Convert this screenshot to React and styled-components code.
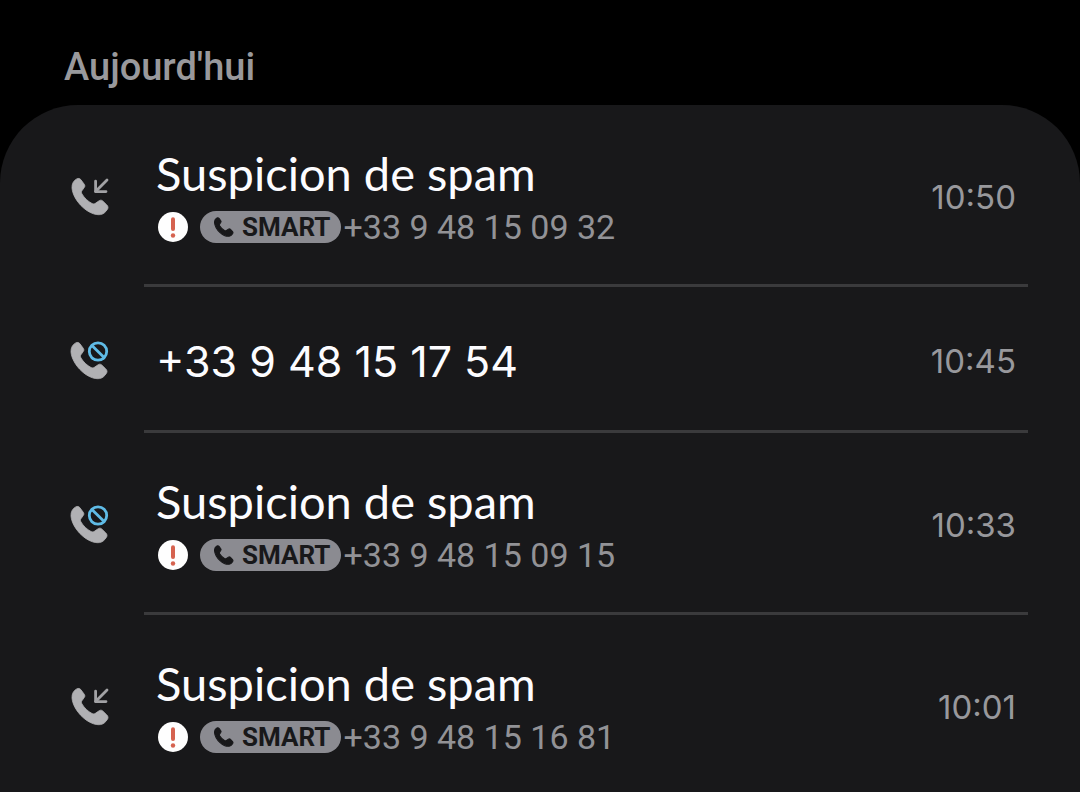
import React from "react";
import styled, { createGlobalStyle } from "styled-components";

const calls = [
	{ id: 1, type: "incoming", title: "Suspicion de spam", number: "+33 9 48 15 09 32", time: "10:50" },
	{ id: 2, type: "blocked", title: "+33 9 48 15 17 54", time: "10:45" },
	{ id: 3, type: "blocked", title: "Suspicion de spam", number: "+33 9 48 15 09 15", time: "10:33" },
	{ id: 4, type: "incoming", title: "Suspicion de spam", number: "+33 9 48 15 16 81", time: "10:01" },
];

const HANDSET =
	"M8.7 4.9C10.2 4.1 11.8 4.3 12.8 5.6L16.2 10.2C17 11.4 17.1 12.4 16.2 13.6L13.9 16.8C13.2 17.8 13.3 18.8 14 20C16.4 24 20 27.4 24 29.5C25.2 30.1 26.4 30 27.4 29.3L31.2 26.7C32.4 25.9 33.6 26 34.7 26.9L38.8 30.9C40.2 32.3 40.4 33.9 39.3 35.5C37.4 38.3 35.4 40.2 32.4 40.6C26.9 41.2 20.6 38.5 14.8 33.3C8.6 27.6 4.5 20.3 4 13.9C3.8 9.8 5.6 6.5 8.7 4.9Z";

function CallIcon({ type }) {
	const blocked = type === "blocked";
	return (
		<Icon viewBox="0 0 44 44" role="img" aria-label={blocked ? "Appel bloqué" : "Appel entrant"}>
			<path
				d={HANDSET}
				fill="#b1b1b4"
				stroke="#b1b1b4"
				strokeWidth="0.8"
				transform={blocked ? "translate(-1 0)" : undefined}
			/>
			{blocked ? (
				<g fill="none" stroke="#5fbbe6" strokeWidth="2.8">
					<circle cx="30" cy="13.5" r="8.7" />
					<path d="M23.9 7.4L36.1 19.6" />
				</g>
			) : (
				<g fill="none" stroke="#a2a2a5" strokeWidth="2.8" strokeLinecap="round" strokeLinejoin="round">
					<path d="M39 6L27.6 17.4" />
					<path d="M27.6 7.2V17.6H38" />
				</g>
			)}
		</Icon>
	);
}

function App() {
	return (
		<Page>
			<GlobalStyle />
			<Day>Aujourd'hui</Day>
			<List>
				{calls.map((call) => (
					<Call key={call.id}>
						<CallIcon type={call.type} />
						<Content $tall={Boolean(call.number)}>
							<Details>
								<Title $digits={!call.number}>{call.title}</Title>
								{call.number && (
									<Info>
										<Warning viewBox="0 0 30 30" role="img" aria-label="Spam">
											<circle cx="15" cy="15" r="15" fill="#fefefe" />
											<path d="M15 7.2V17" stroke="#d5624f" strokeWidth="4" strokeLinecap="round" />
											<circle cx="15" cy="23.5" r="2.2" fill="#d5624f" />
										</Warning>
										<Badge>
											<svg viewBox="3 3 39 39" width="20" height="20" aria-hidden="true">
												<path d={HANDSET} fill="#18181a" stroke="#18181a" strokeWidth="2" />
											</svg>
											SMART
										</Badge>
										<Number>{call.number}</Number>
									</Info>
								)}
							</Details>
							<Time>{call.time}</Time>
						</Content>
					</Call>
				))}
			</List>
		</Page>
	);
}

const GlobalStyle = createGlobalStyle`
	* {
		box-sizing: border-box;
	}
	body {
		margin: 0;
		background: #000;
	}
`;
const Page = styled.main`
	display: flex;
	flex-direction: column;
	height: 100vh;
	background: #000;
	font-family: Roboto, sans-serif;
`;
const Day = styled.h1`
	margin: 0;
	padding: 47px 64px 18px;
	color: #99999c;
	font-size: 38px;
	font-weight: 500;
	line-height: 40px;
`;
const List = styled.ul`
	flex: 1;
	min-height: 0;
	margin: 0;
	padding: 0;
	list-style: none;
	overflow-y: auto;
	scrollbar-width: none;
	background: #18181a;
	border-radius: 78px 78px 0 0;
`;
const Call = styled.li`
	display: grid;
	grid-template-columns: 44px 1fr;
	align-items: center;
	column-gap: 32px;
	padding: 0 52px 0 68px;
`;
const Icon = styled.svg`
	width: 44px;
	height: 44px;
`;
const Content = styled.div`
	display: flex;
	align-items: center;
	justify-content: space-between;
	min-height: ${(props) => (props.$tall ? "182px" : "146px")};
	padding: 4px 12px 0;
	border-bottom: 3px solid #3a3a3c;

	${Call}:last-child & {
		border-color: transparent;
	}
`;
const Details = styled.div`
	display: flex;
	flex-direction: column;
	gap: 8px;
	padding-top: 1px;
`;
const Title = styled.div`
	color: #fcfcff;
	font-family: ${(props) => (props.$digits ? "Inter" : "Lato")}, sans-serif;
	font-size: ${(props) => (props.$digits ? "43px" : "47px")};
	line-height: 52px;
`;
const Info = styled.div`
	display: flex;
	align-items: center;
	padding-left: 2px;
`;
const Warning = styled.svg`
	width: 30px;
	height: 30px;
	margin-right: 12px;
`;
const Badge = styled.span`
	display: flex;
	align-items: center;
	gap: 8px;
	height: 32px;
	margin-right: 2px;
	padding: 0 11px 0 14px;
	border-radius: 16px;
	background: #8b8b91;
	color: #18181a;
	font-size: 26px;
	font-weight: 700;
	line-height: 32px;
`;
const Number = styled.span`
	color: #929296;
	font-size: 34px;
	line-height: 40px;
`;
const Time = styled.time`
	color: #98989c;
	font-family: Inter, sans-serif;
	font-size: 33px;
	line-height: 40px;
`;

export default App;
